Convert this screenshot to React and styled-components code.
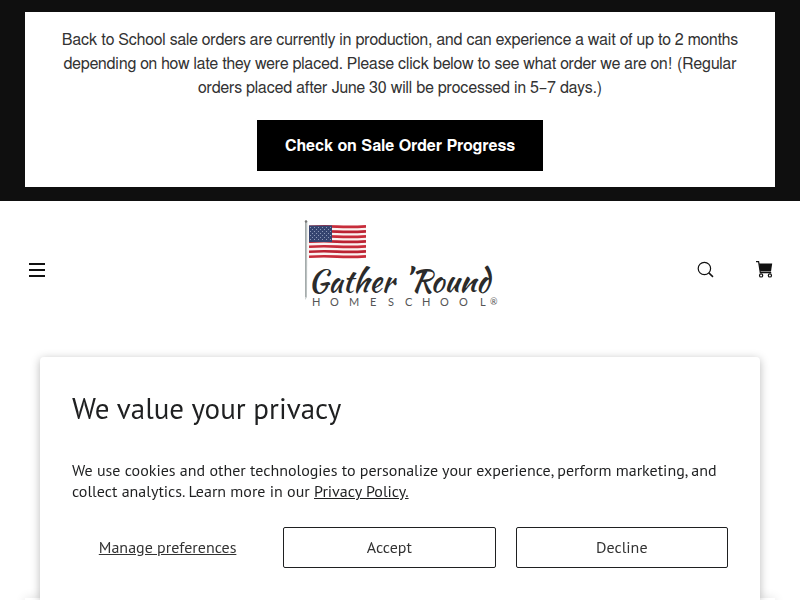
import React from "react";
import styled, { createGlobalStyle } from "styled-components";

const GlobalStyle = createGlobalStyle`
  *, *::before, *::after { box-sizing: border-box; }
  body {
    margin: 0;
    background: #fff;
    color: #1f2021;
    font-family: "PT Sans", "Noto Sans", sans-serif;
    overflow: hidden;
  }
`;

const Announcement = styled.section`
  padding: 12px 25px 14px;
  background: #0f0f0f;
`;

const AnnouncementCard = styled.div`
  display: flex;
  flex-direction: column;
  align-items: center;
  gap: 20px;
  padding: 16px 24px;
  background: #fff;
  font: 16px/24px "FreeSans", "Liberation Sans", Arial, sans-serif;
`;

const Notice = styled.p`
  margin: 0;
  color: #333;
  text-align: center;
`;

const ProgressLink = styled.a`
  padding: 14px 28px 13px;
  background: #000;
  color: #fff;
  font-weight: 700;
  text-decoration: none;
`;

const Header = styled.header`
  display: grid;
  grid-template-columns: 1fr auto 1fr;
  align-items: center;
  padding: 16px 24px 16px 25px;
`;

const IconButton = styled.button`
  display: flex;
  align-items: center;
  justify-content: center;
  width: 24px;
  height: 24px;
  padding: 0;
  border: 0;
  background: none;
  color: #111;
  cursor: pointer;
`;

const Actions = styled.div`
  display: flex;
  justify-content: flex-end;
  gap: 35px;
`;

const LogoLink = styled.a`
  display: block;
  padding-bottom: 14px;
  color: #2b2b2b;
`;

const LogoDrawing = styled.svg`
  display: block;
`;

const Script = styled.text`
  fill: #2b2b2b;
  font: 31px "Kaushan Script", "Dancing Script", "Lato", cursive;
`;

const Caps = styled.text`
  fill: #555;
  font: 11px "Lato", sans-serif;
`;

const Mark = styled.text`
  fill: #555;
  font: 9px "Lato", sans-serif;
`;

const Main = styled.main`
  padding: 259px 25px 40px;
`;

const ContentPanel = styled.section`
  min-height: 300px;
  background: #fff;
  box-shadow: 0 0 10px rgba(0, 0, 0, 0.12);
`;

const CookieBanner = styled.section`
  position: fixed;
  right: 40px;
  bottom: 0;
  left: 40px;
  padding: 32px;
  border-radius: 4px 4px 0 0;
  background: #fff;
  box-shadow: 0 2px 10px rgba(0, 0, 0, 0.28);
`;

const BannerTitle = styled.h2`
  margin: 0 0 33px;
  font-size: 29px;
  font-weight: 400;
  line-height: 38px;
`;

const BannerText = styled.p`
  margin: 0 0 25px;
  font-size: 16px;
  line-height: 21px;
`;

const PolicyLink = styled.a`
  color: inherit;
`;

const Choices = styled.div`
  display: grid;
  grid-template-columns: 9fr 10fr 10fr;
  gap: 20px;
`;

const Choice = styled.button`
  height: 41px;
  padding: 0;
  border: ${({ $plain }) => ($plain ? "0" : "1px solid #1f2021")};
  border-radius: 2px;
  background: #fff;
  color: #333;
  font: 16px/21px "PT Sans", "Noto Sans", sans-serif;
  text-decoration: ${({ $plain }) => ($plain ? "underline" : "none")};
  cursor: pointer;
`;

const stars = [];
for (let row = 0; row < 7; row += 1) {
  for (let col = 0; col < 6 - (row % 2); col += 1) {
    stars.push([6.5 + col * 4 + (row % 2) * 2, 10.5 + row * 2]);
  }
}

function Logo() {
  return (
    <LogoDrawing width="194" height="92" viewBox="0 0 194 92" role="img" aria-label="Gather 'Round Homeschool">
      <path d="M1 4.5 2 3l1.4 1.5L3 80 1.2 83z" fill="#c3c9c9" />
      <path d="M1.7 5v75" stroke="#8f9797" strokeWidth=".8" />
      <circle cx="2" cy="4.5" r="1.2" fill="#777" />
      <path d="M4.5 8.5 62 8.2V41L4.5 41.2z" fill="#faf3f1" />
      {[0, 1, 2, 3, 4, 5, 6].map((n) => (
        <path
          key={n}
          d={`M5 ${9.7 + n * 5}q14-.8 28-.1t29-.2`}
          fill="none"
          stroke={n % 2 ? "#bb2333" : "#c72c3a"}
          strokeWidth="2.6"
        />
      ))}
      <path d="M5 8.5h23V25H5z" fill="#354470" />
      {stars.map(([x, y]) => (
        <circle key={`${x}-${y}`} cx={x} cy={y} r=".5" fill="#aab5d0" />
      ))}
      <Script x="4" y="75">Gather</Script>
      <Script x="99" y="75">’Round</Script>
      <Caps y="89" x="8 26 45 66 84 101 118 136 155 176">HOMESCHOOL</Caps>
      <Mark x="186" y="88">®</Mark>
    </LogoDrawing>
  );
}

export default function App() {
  return (
    <>
      <GlobalStyle />
      <Announcement aria-label="Announcement">
        <AnnouncementCard>
          <Notice>
            Back to School sale orders are currently in production, and can experience a wait of up
            to 2 months depending on how late they were placed. Please click below to see what order
            we are on! (Regular orders placed after June 30 will be processed in 5–7 days.)
          </Notice>
          <ProgressLink href="#progress">Check on Sale Order Progress</ProgressLink>
        </AnnouncementCard>
      </Announcement>
      <Header>
        <IconButton aria-label="Menu">
          <svg width="16" height="14" viewBox="0 0 16 14">
            <path d="M0 1h16M0 7h16M0 13h16" stroke="currentColor" strokeWidth="2" />
          </svg>
        </IconButton>
        <LogoLink href="#home">
          <Logo />
        </LogoLink>
        <Actions>
          <IconButton aria-label="Search">
            <svg width="18" height="18" viewBox="0 0 18 18" fill="none" stroke="currentColor">
              <circle cx="8.4" cy="7.5" r="6.2" strokeWidth="1.2" />
              <path d="m12.8 11.9 4.2 4" strokeWidth="1.5" />
            </svg>
          </IconButton>
          <IconButton aria-label="Cart">
            <svg width="18" height="18" viewBox="0 0 18 18">
              <path d="M1 .6h2.6l1.7 11h10.9" fill="none" stroke="currentColor" strokeWidth="1.2" />
              <path d="M4 2.4h13.2L16 10.6H5.2z" fill="currentColor" />
              <circle cx="6.1" cy="14.4" r="1.6" fill="#fff" stroke="currentColor" strokeWidth="1.2" />
              <circle cx="14.9" cy="14.4" r="1.6" fill="#fff" stroke="currentColor" strokeWidth="1.2" />
            </svg>
          </IconButton>
        </Actions>
      </Header>
      <Main>
        <ContentPanel />
      </Main>
      <CookieBanner aria-labelledby="privacy-title">
        <BannerTitle id="privacy-title">We value your privacy</BannerTitle>
        <BannerText>
          We use cookies and other technologies to personalize your experience, perform marketing,
          and collect analytics. Learn more in our{" "}
          <PolicyLink href="#privacy">Privacy Policy.</PolicyLink>
        </BannerText>
        <Choices>
          <Choice $plain>Manage preferences</Choice>
          <Choice>Accept</Choice>
          <Choice>Decline</Choice>
        </Choices>
      </CookieBanner>
    </>
  );
}
